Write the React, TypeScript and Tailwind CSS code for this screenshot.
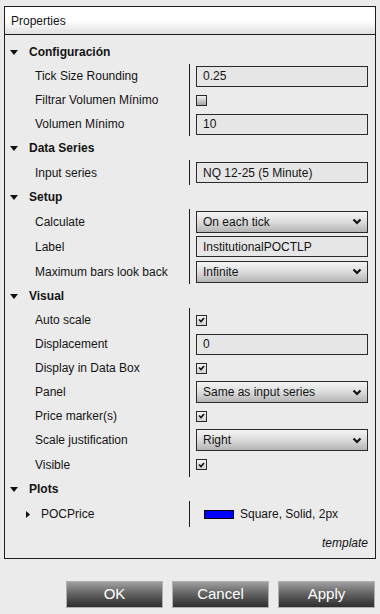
import React from 'react';

type Row =
    | { kind: 'text'; label: string; value: string; h?: string }
    | { kind: 'check'; label: string; checked: boolean; h?: string }
    | { kind: 'select'; label: string; value: string; h?: string };

type Section = { title: string; rows: Row[] };

const sections: Section[] = [
    {
        title: 'Configuración',
        rows: [
            { kind: 'text', label: 'Tick Size Rounding', value: '0.25' },
            { kind: 'check', label: 'Filtrar Volumen Mínimo', checked: false },
            { kind: 'text', label: 'Volumen Mínimo', value: '10' },
        ],
    },
    {
        title: 'Data Series',
        rows: [{ kind: 'text', label: 'Input series', value: 'NQ 12-25 (5 Minute)', h: 'h-[25px]' }],
    },
    {
        title: 'Setup',
        rows: [
            { kind: 'select', label: 'Calculate', value: 'On each tick', h: 'h-[25px]' },
            { kind: 'text', label: 'Label', value: 'InstitutionalPOCTLP', h: 'h-[25px]' },
            { kind: 'select', label: 'Maximum bars look back', value: 'Infinite', h: 'h-[25px]' },
        ],
    },
    {
        title: 'Visual',
        rows: [
            { kind: 'check', label: 'Auto scale', checked: true },
            { kind: 'text', label: 'Displacement', value: '0' },
            { kind: 'check', label: 'Display in Data Box', checked: true },
            { kind: 'select', label: 'Panel', value: 'Same as input series' },
            { kind: 'check', label: 'Price marker(s)', checked: true },
            { kind: 'select', label: 'Scale justification', value: 'Right' },
            { kind: 'check', label: 'Visible', checked: true, h: 'h-[25px]' },
        ],
    },
];

const DownTriangle = () => (
    <svg width="8" height="5" viewBox="0 0 8 5">
        <polygon points="0,0 8,0 4,5" fill="#111" />
    </svg>
);

const Checkbox = ({ checked }: { checked: boolean }) => (
    <div
        className={
            checked
                ? 'w-[11px] h-[11px] border border-[#2a2a2a] bg-gradient-to-b from-[#f4f4f4] to-[#d0d0d0] flex items-center justify-center'
                : 'w-[11px] h-[11px] border border-[#2a2a2a] bg-gradient-to-b from-[#f2f2f2] to-[#a4a4a4]'
        }
    >
        {checked && (
            <svg width="7" height="6" viewBox="0 0 7 6">
                <polyline points="1,2.5 3,4.5 6,1" fill="none" stroke="#111" strokeWidth="1.6" />
            </svg>
        )}
    </div>
);

const Value = ({ row }: { row: Row }) => {
    if (row.kind === 'check') return <Checkbox checked={row.checked} />;
    if (row.kind === 'select')
        return (
            <div className="w-full h-[22px] border border-[#2a2a2a] bg-gradient-to-b from-[#f4f4f4] via-[#dcdcdc] to-[#b4b4b4] flex items-center justify-between pl-[6px] pr-[5px]">
                <span>{row.value}</span>
                <svg width="10" height="7" viewBox="0 0 10 7">
                    <polyline points="1.5,1.5 5,5 8.5,1.5" fill="none" stroke="#111" strokeWidth="2.2" />
                </svg>
            </div>
        );
    return (
        <div className="w-full h-[21px] border border-[#2a2a2a] bg-[#e6e6e6] flex items-center pl-[6px]">
            {row.value}
        </div>
    );
};

const SectionHeader = ({ title }: { title: string }) => (
    <div className="h-6 flex items-center pl-[5px]">
        <DownTriangle />
        <span className="ml-[11px] font-bold">{title}</span>
    </div>
);

const App: React.FC = () => {
    return (
        <div className="w-[380px] h-[614px] bg-[#ebebeb] pt-[6px] px-[4px] font-['Liberation_Sans',Arial,sans-serif] text-[12px] text-[#141414]">
            {/* Properties panel */}
            <div className="h-[553px] border border-[#1e1e1e] flex flex-col">
                <div className="h-[28px] border-b border-[#1e1e1e] bg-gradient-to-b from-white via-white to-[#e0e0e0] flex items-center px-[6px]">
                    Properties
                </div>

                <div className="flex-1 pt-[5px] flex flex-col">
                    {sections.map((s) => (
                        <div key={s.title}>
                            <SectionHeader title={s.title} />
                            {s.rows.map((r) => (
                                <div key={r.label} className={`${r.h ?? 'h-6'} flex`}>
                                    <div className="w-[185px] border-r border-[#1e1e1e] flex items-center pl-[30px]">
                                        {r.label}
                                    </div>
                                    <div className="flex-1 flex items-center pl-[6px] pr-[7px]">
                                        <Value row={r} />
                                    </div>
                                </div>
                            ))}
                        </div>
                    ))}

                    {/* Plots */}
                    <SectionHeader title="Plots" />
                    <div className="h-[26px] flex">
                        <div className="w-[185px] border-r border-[#1e1e1e] flex items-center pl-[21px]">
                            <svg width="4" height="7" viewBox="0 0 4 7">
                                <polygon points="0,0 4,3.5 0,7" fill="#111" />
                            </svg>
                            <span className="ml-[11px]">POCPrice</span>
                        </div>
                        <div className="flex-1 flex items-center pl-[14px]">
                            <div className="w-[30px] h-[9px] border border-black bg-[#0000ff]" />
                            <span className="ml-[6px]">Square, Solid, 2px</span>
                        </div>
                    </div>
                </div>

                <div className="text-right italic pr-[7px] pb-[6px]">template</div>
            </div>

            {/* Buttons */}
            <div className="flex justify-end gap-[9px] mt-[22px] pr-px">
                {['OK', 'Cancel', 'Apply'].map((b) => (
                    <button
                        key={b}
                        className="w-[97px] h-[27px] border border-[#b0b0b0] bg-gradient-to-b from-[#a0a0a0] via-[#606060] to-[#2e2e2e] text-white text-[15px] flex items-center justify-center"
                    >
                        {b}
                    </button>
                ))}
            </div>
        </div>
    );
};

export default App;
